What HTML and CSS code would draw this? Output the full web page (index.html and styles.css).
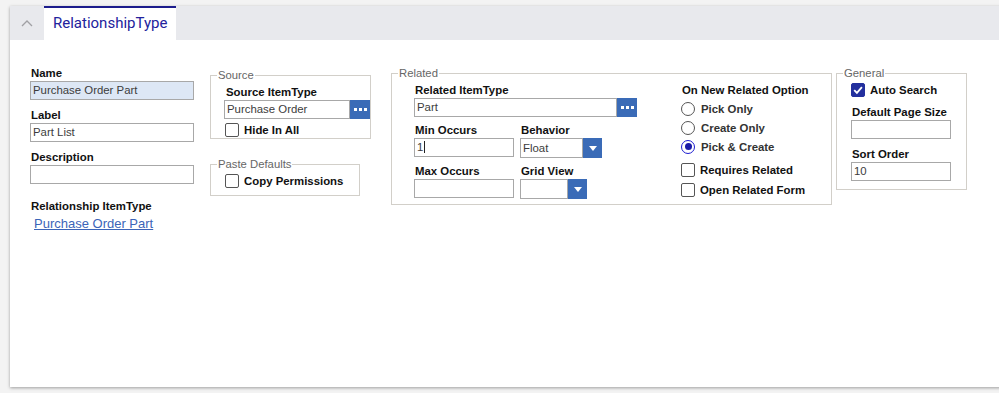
FILE: index.html
```html
<!DOCTYPE html>
<html>
<head>
<meta charset="utf-8">
<title>RelationshipType</title>
<link rel="stylesheet" href="styles.css">
</head>
<body>
<div class="card">
  <div class="tabbar">
    <div class="collapse">
      <svg width="12" height="8" viewBox="0 0 12 8"><path d="M1 7 L6 2 L11 7" fill="none" stroke="#a0a0a4" stroke-width="1.3"/></svg>
    </div>
    <div class="tab">RelationshipType</div>
  </div>

  <div class="content">
    <div class="col-main">
      <div class="lbl">Name</div>
      <div class="input filled">Purchase Order Part</div>
      <div class="lbl">Label</div>
      <div class="input">Part List</div>
      <div class="lbl">Description</div>
      <div class="input"></div>
      <div class="lbl rel-lbl">Relationship ItemType</div>
      <a class="link" href="#">Purchase Order Part</a>
    </div>

    <div class="col-source">
      <fieldset class="fs fs-source">
        <legend>Source</legend>
        <div class="fs-body">
          <div class="lbl ind">Source ItemType</div>
          <div class="picker">
            <div class="input pick-in">Purchase Order</div>
            <div class="btn dots"><i></i><i></i><i></i></div>
          </div>
          <div class="check ind"><span class="box"></span>Hide In All</div>
        </div>
      </fieldset>
      <fieldset class="fs fs-paste">
        <legend>Paste Defaults</legend>
        <div class="fs-body">
          <div class="check ind"><span class="box"></span>Copy Permissions</div>
        </div>
      </fieldset>
    </div>

    <fieldset class="fs fs-related">
      <legend>Related</legend>
      <div class="fs-body rel-body">
        <div class="rel-left">
          <div class="lbl">Related ItemType</div>
          <div class="picker">
            <div class="input rel-pick">Part</div>
            <div class="btn dots"><i></i><i></i><i></i></div>
          </div>
          <div class="rel-grid">
            <div class="cell">
              <div class="lbl">Min Occurs</div>
              <div class="input occ">1<span class="caret"></span></div>
            </div>
            <div class="cell">
              <div class="lbl">Behavior</div>
              <div class="select">
                <div class="input sel-behavior">Float</div>
                <div class="btn drop"><span class="tri"></span></div>
              </div>
            </div>
            <div class="cell">
              <div class="lbl">Max Occurs</div>
              <div class="input occ"></div>
            </div>
            <div class="cell">
              <div class="lbl">Grid View</div>
              <div class="select">
                <div class="input sel-grid"></div>
                <div class="btn drop"><span class="tri"></span></div>
              </div>
            </div>
          </div>
        </div>
        <div class="rel-right">
          <div class="lbl">On New Related Option</div>
          <div class="radios">
            <div class="radio"><span class="circle"></span>Pick Only</div>
            <div class="radio"><span class="circle"></span>Create Only</div>
            <div class="radio"><span class="circle on"></span>Pick &amp; Create</div>
          </div>
          <div class="checks">
            <div class="check row20"><span class="box"></span>Requires Related</div>
            <div class="check row20"><span class="box"></span>Open Related Form</div>
          </div>
        </div>
      </div>
    </fieldset>

    <fieldset class="fs fs-general">
      <legend>General</legend>
      <div class="fs-body gen-body">
        <div class="check"><span class="box checked"><svg width="12" height="12" viewBox="0 0 12 12"><path d="M2.2 6.2 L4.9 8.9 L9.9 3.2" fill="none" stroke="#fff" stroke-width="1.8"/></svg></span>Auto Search</div>
        <div class="lbl gen-lbl">Default Page Size</div>
        <div class="input gen-in"></div>
        <div class="lbl">Sort Order</div>
        <div class="input gen-in">10</div>
      </div>
    </fieldset>
  </div>
</div>
</body>
</html>
```

FILE: styles.css
```css
* { box-sizing: border-box; }
html, body { margin: 0; height: 100%; }
body {
  background: #f3f3f3;
  font-family: "Liberation Sans", Arial, sans-serif;
  overflow: hidden;
}
.card {
  margin: 6px 0 0 10px;
  width: 1000px;
  height: 381px;
  background: #fff;
  box-shadow: 0 1px 3px rgba(0,0,0,0.35);
}
.tabbar {
  height: 34px;
  background: #e8e9ed;
  display: flex;
}
.collapse {
  width: 34px;
  display: flex;
  align-items: center;
  justify-content: center;
  padding-bottom: 1px;
}
.tab {
  width: 132px;
  background: #fff;
  border-top: 2px solid #1c1c8c;
  padding-left: 9px;
  padding-bottom: 2px;
  font: 15px Roboto, sans-serif;
  color: #22229c;
  display: flex;
  align-items: center;
}

.content {
  display: flex;
  align-items: flex-start;
  padding-left: 20px;
}

.lbl {
  font-weight: bold;
  font-size: 11.4px;
  line-height: 14px;
  color: #111;
  white-space: nowrap;
  padding-left: 1px;
}
.input {
  height: 19px;
  border: 1px solid #a8a8a8;
  background: #fff;
  font-size: 11.4px;
  line-height: 17px;
  color: #3c3c3c;
  padding-left: 2px;
  white-space: nowrap;
  overflow: hidden;
}
.input.filled { background: #dde7f5; }

/* column 1 */
.col-main {
  width: 164px;
  margin-top: 26px;
}
.col-main .lbl { margin-bottom: 1px; }
.col-main .input { margin-bottom: 8px; }
.col-main .rel-lbl { margin-top: 15px; }
.link {
  display: block;
  margin-top: 3px;
  padding-left: 4px;
  font-size: 13px;
  line-height: 15px;
  color: #3b64b8;
  text-decoration: underline;
  text-underline-offset: 1px;
}

/* fieldsets */
.fs {
  margin: 0;
  padding: 0;
  border: 1px solid #d2cfc9;
  min-width: 0;
}
.fs legend {
  margin-left: 6px;
  padding: 0 1px;
  font-size: 11.3px;
  line-height: 12px;
  color: #666;
}
.fs-body { padding-left: 13px; }
.ind { margin-left: 1px; }

.col-source {
  width: 161px;
  margin-left: 16px;
  margin-top: 29px;
}
.fs-source .fs-body { padding-top: 4px; padding-bottom: 0; }
.fs-source .lbl { margin-bottom: 1px; }
.picker { display: flex; }
.pick-in { width: 128px; }
.fs-source .check { margin-top: 3px; }

.fs-paste {
  width: 150px;
  margin-top: 19px;
}
.fs-paste .fs-body { padding-top: 3px; padding-bottom: 6px; }

.btn {
  width: 20px;
  height: 19px;
  background: #3a6bb7;
  display: flex;
  align-items: center;
  justify-content: center;
}
.dots { gap: 2px; }
.dots i {
  display: block;
  width: 3px;
  height: 3px;
  background: #fff;
}
.drop { width: 19px; height: 20px; }
.tri {
  width: 0;
  height: 0;
  border-left: 4.5px solid transparent;
  border-right: 4.5px solid transparent;
  border-top: 5px solid #fff;
  margin-top: 1px;
}

/* checkbox / radio */
.check, .radio {
  display: flex;
  align-items: center;
  height: 16px;
  font-weight: bold;
  font-size: 11.4px;
  color: #111;
  white-space: nowrap;
}
.box {
  width: 14px;
  height: 14px;
  border: 1.5px solid #555;
  border-radius: 2px;
  margin-right: 5px;
  flex: none;
  display: flex;
  align-items: center;
  justify-content: center;
}
.box.checked {
  background: #23309e;
  border-color: #23309e;
}
.radio { height: 19px; color: #333; }
.circle {
  width: 14px;
  height: 14px;
  border: 1.5px solid #555;
  border-radius: 50%;
  margin-right: 6px;
  flex: none;
  display: flex;
  align-items: center;
  justify-content: center;
}
.circle.on { border-color: #1c1cd0; }
.circle.on::after {
  content: "";
  width: 7px;
  height: 7px;
  border-radius: 50%;
  background: #1a1aa8;
}

/* related */
.fs-related {
  width: 441px;
  margin-left: 20px;
  margin-top: 27px;
}
.rel-body {
  display: flex;
  padding-left: 22px;
  padding-top: 4px;
  padding-bottom: 4px;
}
.rel-left { width: 223px; }
.rel-left .lbl { margin-bottom: 1px; }
.rel-pick { width: 203px; }
.rel-left .picker { margin-bottom: 6px; }
.rel-grid {
  display: grid;
  grid-template-columns: 106px auto;
  row-gap: 6px;
}
.occ { width: 100px; }
.select { display: flex; }
.sel-behavior { width: 63px; height: 20px; line-height: 18px; }
.sel-grid { width: 48px; height: 20px; }
.caret {
  display: inline-block;
  width: 1px;
  height: 12px;
  background: #222;
  vertical-align: -2px;
  margin-left: 1px;
}
.rel-right { margin-left: 44px; }
.radios { margin-top: 2px; }
.checks { margin-top: 4px; }
.check.row20 { height: 20px; color: #111; }

/* general */
.fs-general {
  width: 131px;
  margin-left: 4px;
  margin-top: 27px;
}
.gen-body {
  padding-left: 14px;
  padding-top: 3px;
  padding-bottom: 8px;
}
.gen-body .check .box { margin-right: 5px; }
.gen-lbl { margin-top: 7px; }
.gen-body .lbl { margin-bottom: 1px; }
.gen-in { width: 100px; margin-bottom: 8px; }
.gen-in:last-child { margin-bottom: 0; }
```
